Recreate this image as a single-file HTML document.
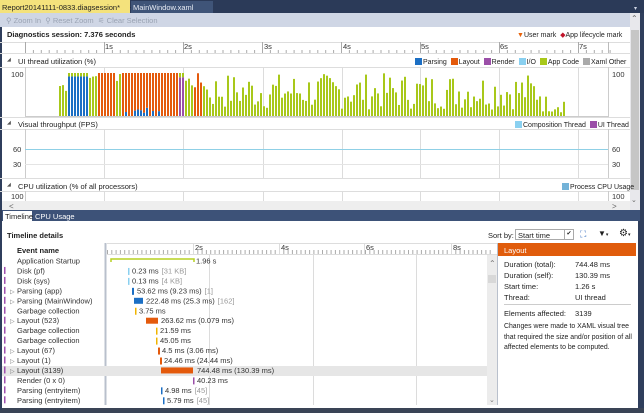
<!DOCTYPE html>
<html><head><meta charset="utf-8">
<style>
*{margin:0;padding:0;box-sizing:border-box}
body{width:644px;height:413px;overflow:hidden;background:#2f3e5c;font-family:"Liberation Sans",sans-serif;font-size:7.5px;color:#1e1e1e;position:relative}
.a{position:absolute;white-space:nowrap}
.b{font-weight:bold}
.sq{display:inline-block;width:7px;height:7px;vertical-align:-1px;margin-right:1px}
.lg{font-size:7px}
</style></head><body>
<div class="a" style="left:0;top:0;width:644px;height:13px;background:#2b3a58"></div>
<div class="a" style="left:0;top:0;width:130px;height:13px;background:#f4e27c;padding:3px 0 0 2px;color:#1e1e1e">Report20141111-0833.diagsession* <span style="margin-left:8px">⊸</span><span style="margin-left:6px">✕</span></div>
<div class="a" style="left:131px;top:1px;width:82px;height:12px;background:#3f5478;padding:2px 0 0 2px;color:#e8ecf4">MainWindow.xaml</div>
<div class="a" style="left:634px;top:5px;color:#cfd6e5;font-size:6px">▾</div>
<div class="a" style="left:0;top:13px;width:630px;height:14px;background:#cfd6e5;padding:3px 0 0 6px;color:#9aa3b3">⚲ Zoom In &nbsp;⚲ Reset Zoom &nbsp;⚟ Clear Selection</div>
<div class="a" style="left:2px;top:27px;width:628px;height:183px;background:#fff"></div>
<div class="a b" style="left:7px;top:30px">Diagnostics session: 7.376 seconds</div>
<div class="a lg" style="left:517px;top:31px"><span style="color:#e8620a">▼</span>User mark &nbsp;<span style="color:#c0142a">◆</span>App lifecycle mark</div>
<div class="a" style="left:630px;top:13px;width:10px;height:197px;background:#e8e8ec"></div>
<div class="a" style="left:631px;top:14px;color:#666;font-size:8px">⌃</div>
<div class="a" style="left:631px;top:30px;width:8px;height:160px;background:#c6c6c6"></div>
<div class="a" style="left:631px;top:196px;color:#666;font-size:7px">⌄</div>
<div class="a" style="left:640px;top:13px;width:4px;height:400px;background:#2f3e5c"></div>

<svg class="a" style="left:0;top:0" width="644" height="413">
<line x1="0" y1="42.5" x2="630" y2="42.5" stroke="#ddd"/>
<line x1="0" y1="53.5" x2="630" y2="53.5" stroke="#ddd"/>
<line x1="25.5" y1="42" x2="25.5" y2="53" stroke="#bbb"/>
<line x1="608.5" y1="42" x2="608.5" y2="53" stroke="#bbb"/>
<g id="ticks" stroke="#aaa"></g>
<g font-family="Liberation Sans" font-size="7.5" fill="#333">
<text x="105" y="49">1s</text><text x="184" y="49">2s</text><text x="264" y="49">3s</text><text x="343" y="49">4s</text><text x="421" y="49">5s</text><text x="500" y="49">6s</text><text x="579" y="49">7s</text>
</g>
<line x1="0" y1="67.5" x2="630" y2="67.5" stroke="#ddd"/>
<line x1="25.5" y1="67" x2="25.5" y2="117" stroke="#ccc"/>
<line x1="608.5" y1="67" x2="608.5" y2="117" stroke="#ccc"/>
<line x1="25" y1="116.5" x2="608" y2="116.5" stroke="#ccc"/>
<g id="grid1" stroke="#dcdcdc"></g>
<g id="bars"></g>
<line x1="0" y1="117.5" x2="630" y2="117.5" stroke="#ddd"/>
<line x1="0" y1="129.5" x2="630" y2="129.5" stroke="#ddd"/>
<line x1="25.5" y1="129" x2="25.5" y2="178" stroke="#ccc"/>
<line x1="608.5" y1="129" x2="608.5" y2="178" stroke="#ccc"/>
<g id="grid2" stroke="#dcdcdc"></g>
<line x1="25" y1="149.5" x2="608" y2="149.5" stroke="#8fd0e6"/>
<line x1="25" y1="164.5" x2="608" y2="164.5" stroke="#e4e4e4"/>
<line x1="0" y1="178.5" x2="630" y2="178.5" stroke="#ddd"/>
<line x1="0" y1="191.5" x2="630" y2="191.5" stroke="#ddd"/>
<line x1="25.5" y1="191" x2="25.5" y2="201" stroke="#ccc"/>
<line x1="608.5" y1="191" x2="608.5" y2="201" stroke="#ccc"/>
<g id="grid3" stroke="#dcdcdc"></g>
<rect x="2" y="201" width="628" height="9" fill="#eeeeee"/>
<g font-family="Liberation Sans" font-size="7.5" fill="#333">
<text x="11" y="77">100</text><text x="612" y="77">100</text>
<text x="13" y="152">60</text><text x="612" y="152">60</text>
<text x="13" y="167">30</text><text x="612" y="167">30</text>
<text x="11" y="199">100</text><text x="612" y="199">100</text>
<text x="9" y="209" font-size="8" fill="#666">&lt;</text><text x="612" y="209" font-size="8" fill="#666">&gt;</text>
</g>
</svg>
<div class="a" style="left:7px;top:57px;font-size:5px;color:#555">◢</div>
<div class="a" style="left:18px;top:57px">UI thread utilization (%)</div>
<div class="a lg" style="left:415px;top:58px"><span class="sq" style="background:#1c6fc4"></span>Parsing <span class="sq" style="background:#e45a0c;margin-left:2px"></span>Layout <span class="sq" style="background:#9b4fa8;margin-left:2px"></span>Render <span class="sq" style="background:#8ad0f0;margin-left:2px"></span>I/O <span class="sq" style="background:#a8c81a;margin-left:2px"></span>App Code <span class="sq" style="background:#aaa;margin-left:2px"></span>Xaml Other</div>
<div class="a" style="left:7px;top:120px;font-size:5px;color:#555">◢</div>
<div class="a" style="left:18px;top:120px">Visual throughput (FPS)</div>
<div class="a lg" style="left:515px;top:121px"><span class="sq" style="background:#8ad0f0"></span>Composition Thread <span class="sq" style="background:#9b4fa8;margin-left:2px"></span>UI Thread</div>
<div class="a" style="left:7px;top:182px;font-size:5px;color:#555">◢</div>
<div class="a" style="left:18px;top:182px">CPU utilization (% of all processors)</div>
<div class="a lg" style="left:562px;top:183px"><span class="sq" style="background:#74b3d8"></span>Process CPU Usage</div>

<div class="a" style="left:0;top:210px;width:640px;height:11px;background:#3d5278"></div>
<div class="a" style="left:3px;top:211px;width:29px;height:10px;background:#fff;padding:1px 0 0 2px">Timeline</div>
<div class="a" style="left:35px;top:212px;color:#fff">CPU Usage</div>
<div class="a" style="left:2px;top:221px;width:636px;height:187px;background:#fff"></div>
<div class="a b" style="left:7px;top:231px">Timeline details</div>
<div class="a" style="left:488px;top:231px">Sort by:</div>
<div class="a" style="left:515px;top:229px;width:59px;height:11px;border:1px solid #aaa;padding:1px 0 0 2px">Start time<span style="position:absolute;right:0;top:0;width:9px;height:9px;border-left:1px solid #aaa;font-size:6px;text-align:center">✔</span></div>
<div class="a" style="left:580px;top:229px;color:#3a6fc0;font-size:9px">⛶</div>
<div class="a" style="left:598px;top:229px;font-size:8px">▼<span style="font-size:5px">▾</span></div>
<div class="a" style="left:619px;top:228px;font-size:10px">⚙<span style="font-size:5px">▾</span></div>

<svg class="a" style="left:0;top:0" width="644" height="413">
<line x1="105.5" y1="243" x2="105.5" y2="405" stroke="#b9c0cc" stroke-width="2"/>
<line x1="107" y1="243.5" x2="497" y2="243.5" stroke="#ddd"/>
<line x1="107" y1="254.5" x2="497" y2="254.5" stroke="#ddd"/>
<g id="dticks" stroke="#aaa"></g>
<g stroke="#dcdcdc"><line x1="209.5" y1="255" x2="209.5" y2="405"/><line x1="313.5" y1="255" x2="313.5" y2="405"/><line x1="416.5" y1="255" x2="416.5" y2="405"/><line x1="193.5" y1="243" x2="193.5" y2="254"/><line x1="279.5" y1="243" x2="279.5" y2="254"/><line x1="364.5" y1="243" x2="364.5" y2="254"/><line x1="451.5" y1="243" x2="451.5" y2="254"/></g>
<rect x="0" y="366" width="487" height="10" fill="#e6e6e6"/>
<g font-family="Liberation Sans" font-size="7.5" fill="#333"><text x="195" y="250">2s</text><text x="281" y="250">4s</text><text x="366" y="250">6s</text><text x="453" y="250">8s</text></g>
<path d="M111 262 V259 H194 V262" fill="none" stroke="#b5d020" stroke-width="1.5"/>
<g id="rows"></g>
<rect x="487" y="255" width="10" height="150" fill="#ececec"/>
<rect x="488" y="275" width="8" height="8" fill="#d8d8d8"/>
<text x="489" y="266" font-size="8" fill="#777" font-family="Liberation Sans">⌃</text>
<text x="489" y="402" font-size="7" fill="#777" font-family="Liberation Sans">⌄</text>
<line x1="497.5" y1="243" x2="497.5" y2="405" stroke="#b9c0cc"/>
</svg>

<div class="a" style="left:498px;top:243px;width:138px;height:13px;background:#e05c0c;color:#fff;padding:3px 0 0 6px">Layout</div>
<div class="a" style="left:504px;top:259px;line-height:11px">Duration (total):<br>Duration (self):<br>Start time:<br>Thread:</div>
<div class="a" style="left:575px;top:259px;line-height:11px">744.48 ms<br>130.39 ms<br>1.26 s<br>UI thread</div>
<div class="a" style="left:504px;top:304px;width:127px;height:1px;background:#ccc"></div>
<div class="a" style="left:504px;top:309px">Elements affected:</div>
<div class="a" style="left:575px;top:309px">3139</div>
<div class="a" style="left:504px;top:322px;line-height:10.5px;font-size:6.9px">Changes were made to XAML visual tree<br>that required the size and/or position of all<br>affected elements to be computed.</div>
<div class="a" style="left:0;top:408px;width:644px;height:5px;background:#3a4456"></div>
<div class="a" style="left:0;top:210px;width:2px;height:200px;background:#2f3e5c"></div>

<script>
var NS="http://www.w3.org/2000/svg";
function el(p,t,a){var e=document.createElementNS(NS,t);for(var k in a)e.setAttribute(k,a[k]);p.appendChild(e);return e;}
var tk=document.getElementById('ticks');
for(var i=0;i<75;i++){var x=25.5+i*7.9;var maj=i%10==0;el(tk,'line',{x1:x,x2:x,y1:maj?42:50,y2:53});}
var gx=[104.5,183.5,263.5,342.5,420.5,499.5,578.5];
['grid1','grid2','grid3'].forEach(function(id,j){var g=document.getElementById(id);var ys=[[67,116],[129,178],[191,201]][j];gx.forEach(function(x){el(g,'line',{x1:x,x2:x,y1:ys[0],y2:ys[1]});});});
var dt=document.getElementById('dticks');
for(var i=0;i<90;i++){var x=107.5+i*4.3;el(dt,'line',{x1:x,x2:x,y1:250,y2:254});}
var s=7;function r(){s=(s*9301+49297)%233280;return s/233280;}
var C={p:'#1c6fc4',l:'#e45a0c',r:'#9b4fa8',a:'#a8c81a'};
var B=document.getElementById('bars');var base=116,H=43;
for(var x=59;x<566;x+=3){
 var segs=[];
 if(x<66){segs=[['a',0.55+r()*0.3]];}
 else if(x<89){segs=[['p',0.92],['a',0.08]];}
 else if(x<96){segs=[['a',0.85+r()*0.15]];}
 else if(x<115){segs=[['l',1]];}
 else if(x<121){segs=[['a',0.8+r()*0.2]];}
 else if(x<178){var bl=(x<160&&r()<0.5)?0.05+r()*0.15:0;segs=[['p',bl],['l',1-bl]];}
 else if(x<184){segs=[['r',0.9],['a',0.1]];}
 else if(x<206){segs=[[(x<192||x>201)?'a':'l',0.6+r()*0.4]];}
 else {var h=0.15+r()*0.85;if(x>540)h*=0.5;segs=[['a',h]];}
 var y=base;
 segs.forEach(function(sg){var h=sg[1]*H;if(h<=0)return;y-=h;el(B,'rect',{x:x,y:y,width:2,height:h,fill:C[sg[0]]});});
}
var rows=[
['Application Startup',0,null,0,0,'1.96 s','',196],
['Disk (pf)',1,'#8ad0f0',128,1.5,'0.23 ms','[31 KB]',132],
['Disk (sys)',1,'#8ad0f0',128,1.5,'0.13 ms','[4 KB]',132],
['Parsing (app)',2,'#1c6fc4',132,2,'53.62 ms (9.23 ms)','[1]',137],
['Parsing (MainWindow)',2,'#1c6fc4',134,9,'222.48 ms (25.3 ms)','[162]',146],
['Garbage collection',1,'#f0b400',135,1.5,'3.75 ms','',139],
['Layout (523)',2,'#e45a0c',146,12,'263.62 ms (0.079 ms)','',161],
['Garbage collection',1,'#f0b400',156,1.5,'21.59 ms','',160],
['Garbage collection',1,'#f0b400',156,1.5,'45.05 ms','',160],
['Layout (67)',2,'#e45a0c',158,2,'4.5 ms (3.06 ms)','',162],
['Layout (1)',2,'#e45a0c',160,2,'24.46 ms (24.44 ms)','',164],
['Layout (3139)',2,'#e45a0c',161,32,'744.48 ms (130.39 ms)','',197],
['Render (0 x 0)',1,'#9b4fa8',193,1.5,'40.23 ms','',197],
['Parsing (entryitem)',1,'#1c6fc4',161,1.5,'4.98 ms','[45]',165],
['Parsing (entryitem)',1,'#1c6fc4',163,1.5,'5.79 ms','[45]',167]];
var R=document.getElementById('rows');
var hd=el(R,'text',{x:17,y:253,'font-size':7.5,'font-weight':'bold','font-family':'Liberation Sans',fill:'#222'});hd.textContent='Event name';
rows.forEach(function(w,i){var yc=261+i*9.95;
 if(w[1]>0)el(R,'rect',{x:4,y:yc-4,width:1.5,height:7,fill:'#a04fb0'});
 if(w[1]==2){var t=el(R,'text',{x:10,y:yc+2.5,'font-size':6,fill:'#777','font-family':'DejaVu Sans'});t.textContent='▷';}
 var t=el(R,'text',{x:17,y:yc+2.5,'font-size':7.5,'font-family':'Liberation Sans',fill:'#333'});t.textContent=w[0];
 if(w[2])el(R,'rect',{x:w[3],y:yc-3,width:w[4],height:w[4]>3?6:7,fill:w[2]});
 var t2=el(R,'text',{x:w[7],y:yc+2.5,'font-size':7.5,'font-family':'Liberation Sans',fill:'#333'});t2.textContent=w[5];
 if(w[6]){var ts=el(t2,'tspan',{fill:'#999',dx:3});ts.textContent=w[6];}
});
</script>
</body></html>
